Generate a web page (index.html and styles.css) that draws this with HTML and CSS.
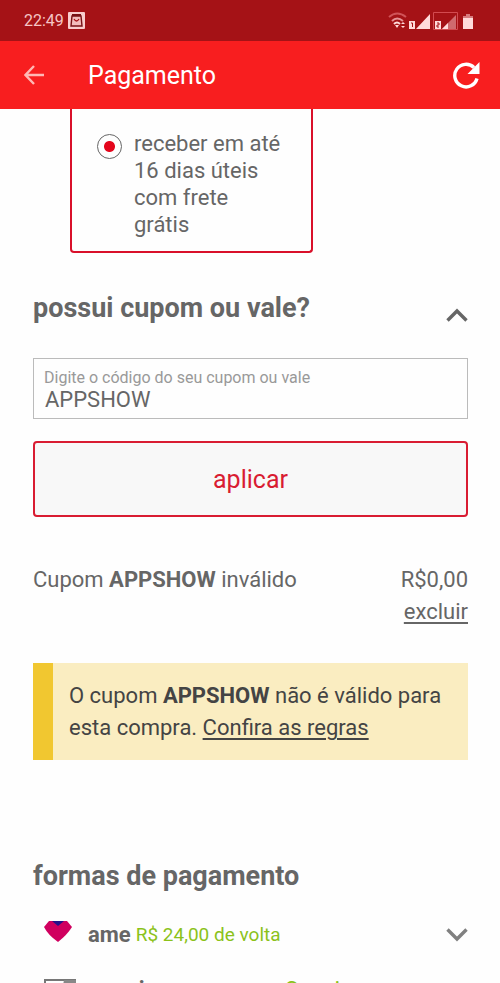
FILE: index.html
```html
<!DOCTYPE html>
<html lang="pt-BR">
<head>
<meta charset="utf-8">
<meta name="viewport" content="width=device-width, initial-scale=1">
<title>Pagamento</title>
<link rel="stylesheet" href="styles.css">
</head>
<body>
<div class="status">
  <span>22:49</span>
  <svg class="bag" width="17" height="17" viewBox="0 0 17 17"><rect width="17" height="17" rx="1" fill="#f9cdcd"/><path d="M4 4h9l1 10H3z" fill="#f3bcbc" stroke="#781014" stroke-width="1.400"/><path d="M4 3h9" stroke="#781014" stroke-width="2"/><path d="M6 7q2.500 4 5 0" fill="none" stroke="#a51216" stroke-width="1.300"/></svg>
  <svg class="signals" width="88" height="20" viewBox="0 0 88 20">
    <g fill="none" stroke-width="2"><path d="M1 6q8-7 17 0" stroke="#d05358"/><path d="M4 10q5-5 11 0" stroke="#e59295"/><path d="M6 13q3-3 6 0" stroke="#ffdada"/></g>
    <path d="M7 14h4l-2 3zM13 13l2-2 2 2zM13 15h4l-2 2z" fill="#ffdada"/>
    <path d="M21 10h6v8h-6zM28 18 42 3v15zM47 10h6v8h-6z" fill="#ffdada"/>
    <path d="M23 12h1.500v4M49 12h2v2h-2v2h2" fill="none" stroke="#a51216"/>
    <path d="M45.500 1.500h24v17h-24z" fill="none" stroke="#d34b50"/>
    <path d="M54 18 68 4v14z" fill="#cf6a6e"/><path d="M54 18l6-6v6z" fill="#ffdada"/>
    <path d="M75 5h3V3h4v2h3v3H75z" fill="#d77b7e"/><path d="M75 7h10v11H75z" fill="#ffdada"/>
  </svg>
</div>
<header class="bar">
  <button class="icon-button" aria-label="Voltar"><svg width="20" height="20" viewBox="0 0 20 20"><path d="M20 10H2M10 1 1.500 10l8.500 9" fill="none" stroke="#ffb8b4" stroke-width="2.400"/></svg></button>
  <h1 class="title">Pagamento</h1>
  <button class="icon-button" aria-label="Recarregar"><svg width="28" height="28" viewBox="0 0 28 28"><path d="M25 17.500A11.300 11.300 0 1 1 22 6.500" fill="none" stroke="#fff" stroke-width="3.400"/><path d="M27.500 1v12h-12z" fill="#fff"/></svg></button>
</header>
<main class="page">
  <label class="shipping">
    <input class="radio" type="radio" name="frete" checked>
    <span>receber em até 16 dias úteis com frete grátis</span>
  </label>
  <section class="coupon">
    <div class="section-head">
      <h2>possui cupom ou vale?</h2>
      <button class="icon-button chevron" aria-label="Recolher"><svg width="22" height="18" viewBox="0 0 22 18"><path d="M1.500 12.500 11 3l9.500 9.500" fill="none" stroke="#666" stroke-width="3.400"/></svg></button>
    </div>
    <div class="field">
      <label for="code">Digite o código do seu cupom ou vale</label>
      <input id="code" type="text" value="APPSHOW">
    </div>
    <button class="apply">aplicar</button>
    <div class="result">
      <p>Cupom <strong>APPSHOW</strong> inválido</p>
      <p class="amount">R$0,00<br><a href="#">excluir</a></p>
    </div>
    <p class="notice">O cupom <strong>APPSHOW</strong> não é válido para esta compra. <a href="#">Confira as regras</a></p>
  </section>
  <section class="methods">
    <h2>formas de pagamento</h2>
    <div class="method">
      <svg class="logo" width="28" height="28" viewBox="0 0 28 28"><path d="M5 0h18l5 6q-5 8-14 15Q4 14 0 6z" fill="#d0005f"/><path d="M8 0h12l-6 5z" fill="#24128a"/></svg>
      <strong>ame</strong><span class="bonus">R$ 24,00 de volta</span>
      <button class="icon-button chevron" aria-label="Expandir"><svg width="22" height="14" viewBox="0 0 22 14"><path d="M1.500 1.500 11 11l9.500-9.500" fill="none" stroke="#808080" stroke-width="3.400"/></svg></button>
    </div>
    <div class="method">
      <svg class="logo card" width="32" height="22" viewBox="0 0 32 22"><path d="M1 1h30v20H1z" fill="none" stroke="#777" stroke-width="2"/><path d="M20 1h12v20H16z" fill="#888"/></svg>
      <strong>americanas</strong><span class="bonus offer">Sem juros</span>
    </div>
  </section>
</main>
</body>
</html>
```
FILE: styles.css
```css
* { box-sizing: border-box; }
body {
  margin: 0;
  height: 100vh;
  display: flex;
  flex-direction: column;
  overflow: hidden;
  background: #fefefe;
  color: #666;
  font: 22px/32px Roboto, sans-serif;
}
h1, h2, p { margin: 0; }
a { color: inherit; text-underline-offset: 3px; text-decoration-thickness: 2px; }
button, input { font: inherit; color: inherit; }
.status {
  flex: none;
  display: flex;
  align-items: center;
  height: 41px;
  padding: 0 24px;
  background: #a51216;
  color: #f6c5c5;
  font-size: 16px;
}
.bag { margin-left: 4px; }
.signals { margin-left: auto; }
.bar {
  flex: none;
  display: flex;
  align-items: center;
  height: 68px;
  padding: 0 20px 0 24px;
  background: #f81e1f;
  color: #fff;
}
.title { flex: 1; margin-left: 44px; padding-top: 2px; font-size: 25px; font-weight: 400; }
.icon-button { display: flex; padding: 0; border: 0; background: none; }
.page { flex: 1; min-height: 0; overflow: hidden; padding: 0 32px 0 33px; }
.shipping {
  display: flex;
  gap: 12px;
  width: 243px;
  height: 144px;
  margin-left: 37px;
  padding: 21px 30px 0 25px;
  border: 2px solid #d9102a;
  border-top: 0;
  border-radius: 0 0 4px 4px;
  line-height: 27px;
}
.radio {
  appearance: none;
  flex: none;
  width: 25px;
  height: 25px;
  margin: 4px 0 0;
  border: 1px solid #666;
  border-radius: 50%;
  background: radial-gradient(circle, #e4061c 5px, transparent 6px);
}
h2 { font-size: 27px; font-weight: 700; line-height: 32px; }
.section-head { display: flex; justify-content: space-between; align-items: flex-end; margin-top: 39px; }
.section-head .chevron { margin-bottom: -2px; }
.field {
  height: 61px;
  margin-top: 34px;
  padding: 9px 10px;
  border: 1px solid #bbb;
}
.field label { display: block; color: #999; font-size: 16px; line-height: 20px; }
.field input {
  display: block;
  width: 100%;
  height: 24px;
  padding: 0 1px;
  border: 0;
  outline: 0;
  background: none;
}
.apply {
  display: block;
  width: 100%;
  height: 76px;
  margin-top: 22px;
  padding: 2px 0 0;
  border: 2px solid #d91c32;
  border-radius: 4px;
  background: #f8f8f8;
  color: #d91c32;
  font-size: 25px;
}
.result { display: flex; justify-content: space-between; margin-top: 47px; }
.amount { text-align: right; }
.notice {
  margin-top: 35px;
  padding: 17px 20px 16px 16px;
  border-left: 20px solid #f1c730;
  background: #faedc1;
  color: #444;
}
.methods { margin-top: 100px; }
.method { display: flex; align-items: center; height: 32px; margin-top: 27px; padding-left: 11px; }
.method + .method { margin-top: 23px; }
.logo { flex: none; margin-right: 16px; }
.card { margin-right: 12px; }
.bonus { margin-left: 5px; color: #8bc21a; font-size: 19px; }
.offer { margin-left: 82px; font-size: 22px; }
.chevron { margin-left: auto; }
```
